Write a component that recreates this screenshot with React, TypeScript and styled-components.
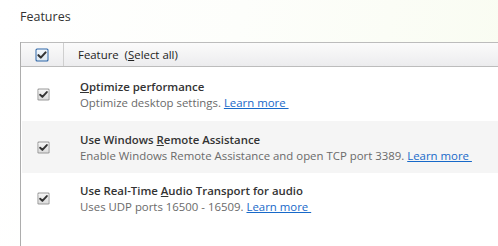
import React from 'react';
import styled, { createGlobalStyle } from 'styled-components';

const GlobalStyle = createGlobalStyle`
	html, body {
		margin: 0;
		padding: 0;
	}
	body {
		width: 498px;
		height: 246px;
		overflow: hidden;
		font-family: "Open Sans", "Noto Sans", sans-serif;
		background: linear-gradient(100deg, #ffffff 0%, #fdfefb 45%, #f9fcf1 100%);
	}
`;

const Page = styled.div`
	height: 246px;
	display: flex;
	flex-direction: column;
	padding: 7px 0 0 20px;
	box-sizing: border-box;
`;

const Title = styled.h2`
	margin: 0 0 15px 0;
	font-size: 12.5px;
	font-weight: 400;
	line-height: 20px;
	color: #333;
`;

const Table = styled.div`
	flex: 1;
	display: flex;
	flex-direction: column;
	border-left: 1px solid #adadad;
	background: #fff;
`;

const HeaderRow = styled.div`
	display: grid;
	grid-template-columns: 43px 1fr;
	height: 23px;
	border-top: 1px solid #bcbcbc;
	border-bottom: 1px solid #bcbcbc;
	background: linear-gradient(#fbfbfb, #ececee);
`;

const CheckCell = styled.div<{ $divider?: boolean }>`
	display: flex;
	align-items: center;
	justify-content: center;
	border-right: ${(p) => (p.$divider ? '1px solid #cfcfcf' : 'none')};
`;

const HeaderLabel = styled.div`
	display: flex;
	align-items: center;
	padding-left: 14px;
	font-size: 11.4px;
	color: #222;
	white-space: pre;
`;

const Row = styled.div<{ $shade?: boolean; $h: number }>`
	display: grid;
	grid-template-columns: 43px 1fr;
	height: ${(p) => p.$h}px;
	box-sizing: border-box;
	margin-left: 1px;
	background: ${(p) => (p.$shade ? '#f5f5f5' : 'transparent')};
`;

const RowText = styled.div`
	display: flex;
	flex-direction: column;
	justify-content: center;
	padding: 2px 0 0 15px;
	font-size: 11.4px;
	line-height: 16px;
	white-space: nowrap;
`;

const RowTitle = styled.div`
	font-weight: 600;
	color: #333;
`;

const RowDesc = styled.div`
	color: #6a6a6a;
`;

const Link = styled.a`
	color: #1769c9;
	text-decoration: underline;
	cursor: pointer;
`;

const U = styled.span`
	text-decoration: underline;
`;

const Box = styled.svg`
	display: block;
	flex-shrink: 0;
`;

const CheckBox = ({ focused }: { focused?: boolean }) => (
	<Box width={focused ? 14 : 13} height={focused ? 14 : 13} viewBox="0 0 14 14">
		<defs>
			<linearGradient id={focused ? 'cbf' : 'cbn'} x1="0" y1="0" x2="0" y2="1">
				<stop offset="0" stopColor={focused ? '#f4f8fc' : '#f6f6f6'} />
				<stop offset="1" stopColor={focused ? '#dde8f2' : '#dcdcdc'} />
			</linearGradient>
		</defs>
		<rect x="0.5" y="0.5" width="13" height="13" rx="1.5" fill={focused ? '#2f67a8' : '#9a9a9a'} />
		<rect x="1.5" y="1.5" width="11" height="11" rx="1" fill={`url(#${focused ? 'cbf' : 'cbn'})`} />
		<path d="M3.4 7.2 L5.8 9.6 L10.6 4.4" fill="none" stroke="#333" strokeWidth="2.1" strokeLinecap="round" strokeLinejoin="round" />
	</Box>
);

const features = [
	{
		key: 'O',
		h: 54,
		title: ['', 'O', 'ptimize performance'],
		desc: 'Optimize desktop settings. ',
	},
	{
		key: 'R',
		h: 52,
		title: ['Use Windows ', 'R', 'emote Assistance'],
		desc: 'Enable Windows Remote Assistance and open TCP port 3389. ',
	},
	{
		key: 'A',
		h: 50,
		title: ['Use Real-Time ', 'A', 'udio Transport for audio'],
		desc: 'Uses UDP ports 16500 - 16509. ',
	},
];

export default function App() {
	return (
		<>
			<GlobalStyle />
			<Page>
				<Title>Features</Title>
				<Table>
					<HeaderRow>
						<CheckCell $divider>
							<CheckBox focused />
						</CheckCell>
						<HeaderLabel>
							Feature  (<U>S</U>elect all)
						</HeaderLabel>
					</HeaderRow>
					{features.map((f, i) => (
						<Row key={f.key} $shade={i % 2 === 1} $h={f.h}>
							<CheckCell>
								<CheckBox />
							</CheckCell>
							<RowText>
								<RowTitle>
									{f.title[0]}
									<U>{f.title[1]}</U>
									{f.title[2]}
								</RowTitle>
								<RowDesc>
									{f.desc}
									<Link>Learn more&nbsp;</Link>
								</RowDesc>
							</RowText>
						</Row>
					))}
				</Table>
			</Page>
		</>
	);
}
